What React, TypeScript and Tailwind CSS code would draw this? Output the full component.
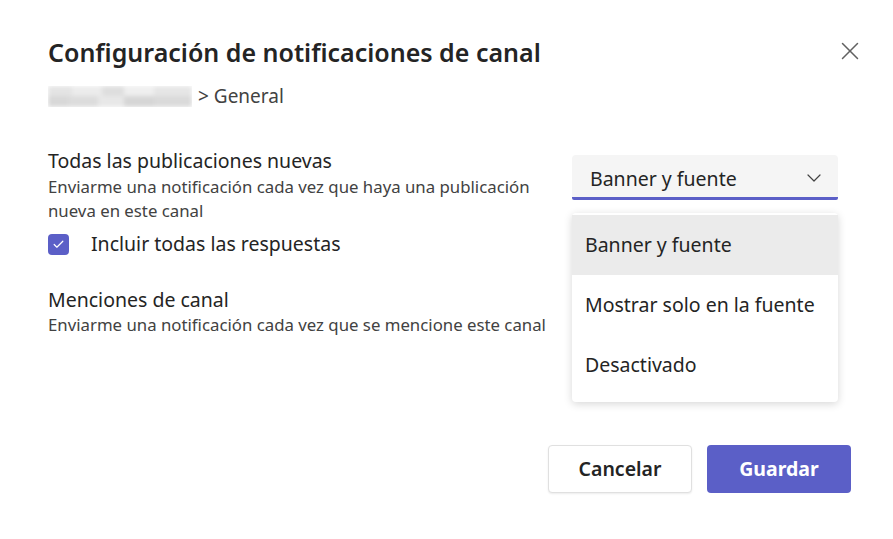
import { Check, ChevronDown, X } from 'lucide-react';

const font = { fontFamily: '"Noto Sans", "Open Sans", Arial, sans-serif' };

// opciones del desplegable
const options = ['Banner y fuente', 'Mostrar solo en la fuente', 'Desactivado'];

function BlurredTeamName() {
  return (
    <div className="relative w-[144px] h-[21px] overflow-hidden mr-[6px]">
      <div className="absolute inset-0 flex flex-col blur-[2px]">
        <div className="flex h-[10px]">
          <div className="w-[24px] bg-[#e4e4e4]" />
          <div className="w-[30px] bg-[#ececec]" />
          <div className="w-[22px] bg-[#dedede]" />
          <div className="w-[30px] bg-[#efefef]" />
          <div className="w-[38px] bg-[#e6e6e6]" />
        </div>
        <div className="flex h-[11px]">
          <div className="w-[20px] bg-[#d8d8d8]" />
          <div className="w-[30px] bg-[#dcdcdc]" />
          <div className="w-[26px] bg-[#e8e8e8]" />
          <div className="w-[30px] bg-[#d6d6d6]" />
          <div className="w-[38px] bg-[#dadada]" />
        </div>
      </div>
    </div>
  );
}

export default function App() {
  return (
    <div style={font} className="w-[893px] h-[539px] bg-white text-[#242424] flex flex-col pl-[48px] pr-[42px] pt-[34px]">
      {/* cabecera */}
      <div className="flex items-start justify-between">
        <h1 className="text-[25px] leading-[36px] font-semibold text-[#242424]">
          Configuración de notificaciones de canal
        </h1>
        <button className="mt-[2px] -mr-[14px] text-[#616161]">
          <X size={30} strokeWidth={1.2} />
        </button>
      </div>
      <div className="flex items-center mt-[14px] text-[19px] leading-[24px] text-[#424242]">
        <BlurredTeamName />
        <span>&gt; General</span>
      </div>

      {/* ajustes */}
      <div className="relative flex justify-between items-start mt-[41px]">
        <div className="flex flex-col w-[510px]">
          <div className="text-[19.5px] leading-[24px]">Todas las publicaciones nuevas</div>
          <div className="text-[16.8px] leading-[24px] text-[#424242] mt-[2px]">
            Enviarme una notificación cada vez que haya una publicación nueva en este canal
          </div>
          <label className="flex items-center mt-[8px] h-[26px]">
            <span className="w-[21px] h-[21px] rounded-[4px] bg-[#5b5fc7] flex items-center justify-center text-white">
              <Check size={13} strokeWidth={2.2} />
            </span>
            <span className="ml-[22px] text-[19.5px] leading-[26px]">Incluir todas las respuestas</span>
          </label>

          <div className="text-[19.5px] leading-[24px] mt-[31px]">Menciones de canal</div>
          <div className="text-[16.8px] leading-[24px] text-[#424242] mt-[1px]">
            Enviarme una notificación cada vez que se mencione este canal
          </div>
        </div>

        <div className="relative w-[266px] mr-[13px] mt-[6px]">
          <div className="h-[45px] bg-[#f5f5f5] rounded-t-[4px] border-b-[3px] border-[#5b5fc7] rounded-b-[2px] flex items-center justify-between pl-[18px] pr-[12px] pt-[5px]">
            <span className="text-[19.5px]">Banner y fuente</span>
            <ChevronDown size={24} strokeWidth={1.2} className="text-[#424242] -mt-[2px]" />
          </div>

          {/* menú desplegable */}
          <div className="absolute left-0 top-[58px] w-[266px] bg-white rounded-[4px] shadow-[0_2px_8px_rgba(0,0,0,0.16)] pt-[2px] pb-[7px] z-10">
            {options.map((opt, i) => (
              <div
                key={opt}
                className={`h-[60px] flex items-center px-[13px] text-[19.5px] ${i === 0 ? 'bg-[#ebebeb]' : ''}`}
              >
                {opt}
              </div>
            ))}
          </div>
        </div>
      </div>

      {/* botones */}
      <div className="flex justify-end gap-[15px] mt-auto mb-[46px]">
        <button className="w-[144px] h-[48px] rounded-[4px] border border-[#e0e0e0] bg-white text-[19.5px] font-semibold text-[#242424] shadow-[0_1px_2px_rgba(0,0,0,0.08)]">
          Cancelar
        </button>
        <button className="w-[144px] h-[48px] rounded-[4px] bg-[#5b5fc7] text-[19.5px] font-bold text-white">
          Guardar
        </button>
      </div>
    </div>
  );
}
